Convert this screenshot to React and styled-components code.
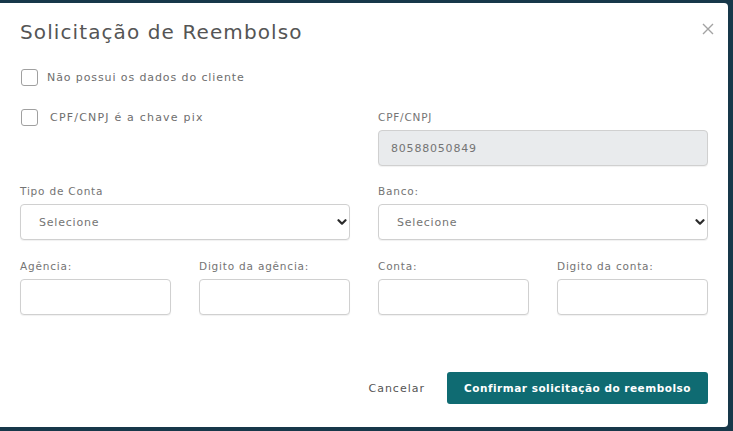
import React from 'react';
import styled, { createGlobalStyle } from 'styled-components';

const GlobalStyle = createGlobalStyle`
  html, body {
    margin: 0;
    padding: 0;
    background: #17384a;
    font-family: "DejaVu Sans", "Open Sans", sans-serif;
  }
  * { box-sizing: border-box; }
`;

const Backdrop = styled.div`
  width: 733px;
  height: 431px;
  padding: 3px 5px 4px 0;
  background: #17384a;
`;

const Modal = styled.div`
  width: 728px;
  height: 424px;
  background: #fff;
  border-radius: 0 4px 4px 0;
  padding: 0 20px;
  display: flex;
  flex-direction: column;
`;

const Header = styled.div`
  display: flex;
  justify-content: space-between;
  align-items: flex-start;
  height: 59px;
  padding-top: 17px;
`;

const Title = styled.h1`
  margin: 0;
  font-size: 20px;
  font-weight: 400;
  color: #555;
  letter-spacing: 1.1px;
`;

const Close = styled.button`
  border: 0;
  background: none;
  padding: 0;
  margin: 2px -8px 0 0;
  width: 16px;
  height: 16px;
  cursor: pointer;
`;

const TopArea = styled.div`
  display: grid;
  grid-template-columns: 1fr 1fr;
  column-gap: 28px;
`;

const CheckList = styled.div`
  display: flex;
  flex-direction: column;
  gap: 23px;
  padding-top: 7px;
`;

const CheckRow = styled.label`
  display: flex;
  align-items: center;
  gap: ${p => p.$gap || 9}px;
  font-size: 11px;
  letter-spacing: ${p => p.$ls || 0.9}px;
  color: #6e6e6e;
`;

const Box = styled.span`
  width: 17px;
  height: 17px;
  border: 1px solid #a0a0a0;
  border-radius: 3px;
  margin-left: 1px;
`;

const Field = styled.div`
  display: flex;
  flex-direction: column;
  margin-top: ${p => p.$mt || 0}px;
`;

const Label = styled.span`
  font-size: 10.5px;
  letter-spacing: 0.8px;
  color: #747474;
  height: 13px;
  line-height: 13px;
  margin-bottom: 6px;
  white-space: nowrap;
`;

const Input = styled.div`
  height: 36px;
  border: 1px solid #d0d0d0;
  border-radius: 4px;
  background: ${p => (p.$disabled ? '#e9ebed' : '#fff')};
  display: flex;
  align-items: center;
  justify-content: space-between;
  padding: 0 2px 0 ${p => p.$pl || 12}px;
  font-size: 11px;
  letter-spacing: 0.8px;
  color: #747474;
  box-shadow: 0 1px 1px rgba(0, 0, 0, 0.06);
`;

const Grid2 = styled.div`
  display: grid;
  grid-template-columns: 1fr 1fr;
  column-gap: 28px;
  margin-top: ${p => p.$mt}px;
`;

const Grid4 = styled.div`
  display: grid;
  grid-template-columns: repeat(4, 1fr);
  column-gap: 28px;
  margin-top: ${p => p.$mt}px;
`;

const Footer = styled.div`
  display: flex;
  justify-content: flex-end;
  align-items: center;
  gap: 22px;
  margin-top: 57px;
`;

const Cancel = styled.button`
  border: 0;
  background: none;
  padding: 0;
  font-family: inherit;
  font-size: 11px;
  letter-spacing: 1px;
  color: #555;
  cursor: pointer;
`;

const Confirm = styled.button`
  border: 0;
  height: 32px;
  width: 261px;
  border-radius: 3px;
  background: #0f6b72;
  color: #fff;
  font-family: inherit;
  font-size: 10.5px;
  letter-spacing: 0.5px;
  font-weight: 700;
  cursor: pointer;
`;

const Chevron = () => (
  <svg width="10" height="10" viewBox="0 0 10 10">
    <path d="M1.5 3.2l3.5 3.5 3.5-3.5" fill="none" stroke="#2b2b2b" strokeWidth="2.2" strokeLinecap="round" strokeLinejoin="round" />
  </svg>
);

export default function App() {
  return (
    <>
      <GlobalStyle />
      <Backdrop>
        <Modal>
          <Header>
            <Title>Solicitação de Reembolso</Title>
            <Close aria-label="Fechar">
              <svg width="14" height="14" viewBox="0 0 14 14">
                <path d="M2 2l10 10M12 2L2 12" stroke="#a3a3a3" strokeWidth="1.4" />
              </svg>
            </Close>
          </Header>
          <TopArea>
            <CheckList>
              <CheckRow><Box />Não possui os dados do cliente</CheckRow>
              <CheckRow $gap={12} $ls={1.2}><Box />CPF/CNPJ é a chave pix</CheckRow>
            </CheckList>
            <Field $mt={49}>
              <Label>CPF/CNPJ</Label>
              <Input $disabled>80588050849</Input>
            </Field>
          </TopArea>
          <Grid2 $mt={19}>
            <Field>
              <Label>Tipo de Conta</Label>
              <Input $pl={18}>Selecione<Chevron /></Input>
            </Field>
            <Field>
              <Label>Banco:</Label>
              <Input $pl={18}>Selecione<Chevron /></Input>
            </Field>
          </Grid2>
          <Grid4 $mt={20}>
            <Field><Label>Agência:</Label><Input /></Field>
            <Field><Label>Digito da agência:</Label><Input /></Field>
            <Field><Label>Conta:</Label><Input /></Field>
            <Field><Label>Digito da conta:</Label><Input /></Field>
          </Grid4>
          <Footer>
            <Cancel>Cancelar</Cancel>
            <Confirm>Confirmar solicitação do reembolso</Confirm>
          </Footer>
        </Modal>
      </Backdrop>
    </>
  );
}
